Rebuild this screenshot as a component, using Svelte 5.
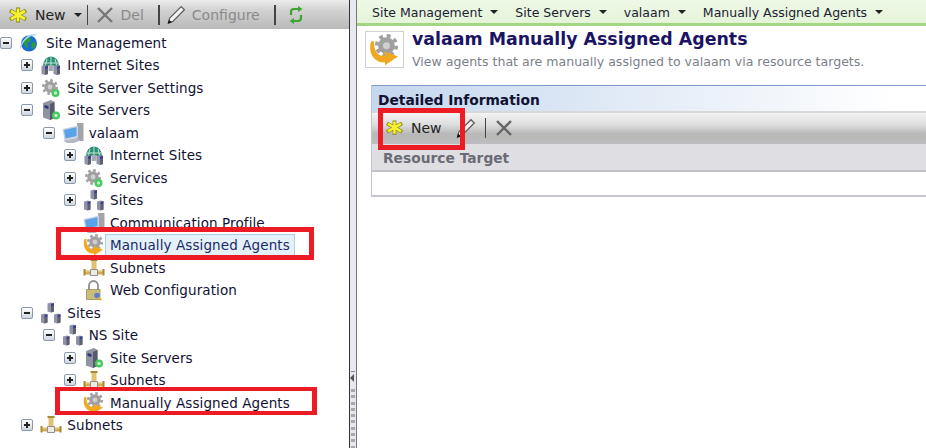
<script>
  const tree = [
    { level: 0, toggle: 'minus', icon: 'globe', label: 'Site Management' },
    { level: 1, toggle: 'plus', icon: 'internet', label: 'Internet Sites' },
    { level: 1, toggle: 'plus', icon: 'gear', label: 'Site Server Settings' },
    { level: 1, toggle: 'minus', icon: 'server', label: 'Site Servers' },
    { level: 2, toggle: 'minus', icon: 'monitor', label: 'valaam' },
    { level: 3, toggle: 'plus', icon: 'internet', label: 'Internet Sites' },
    { level: 3, toggle: 'plus', icon: 'gear', label: 'Services' },
    { level: 3, toggle: 'plus', icon: 'sites', label: 'Sites' },
    { level: 3, toggle: null, icon: 'monitor', label: 'Communication Profile' },
    { level: 3, toggle: null, icon: 'agent', label: 'Manually Assigned Agents', selected: true },
    { level: 3, toggle: null, icon: 'subnet', label: 'Subnets' },
    { level: 3, toggle: null, icon: 'lock', label: 'Web Configuration' },
    { level: 1, toggle: 'minus', icon: 'sites', label: 'Sites' },
    { level: 2, toggle: 'minus', icon: 'sites', label: 'NS Site' },
    { level: 3, toggle: 'plus', icon: 'server', label: 'Site Servers' },
    { level: 3, toggle: 'plus', icon: 'subnet', label: 'Subnets' },
    { level: 3, toggle: null, icon: 'agent', label: 'Manually Assigned Agents' },
    { level: 1, toggle: 'plus', icon: 'subnet', label: 'Subnets' }
  ];

  const crumbs = ['Site Management', 'Site Servers', 'valaam', 'Manually Assigned Agents'];
</script>

{#snippet gearShape(cx, cy, r, fill)}
  <circle {cx} {cy} r={r * 0.72} {fill} />
  <circle {cx} {cy} r={r * 0.84} fill="none" stroke={fill} stroke-width={r * 0.32} stroke-dasharray={(2 * Math.PI * r * 0.84) / 16} />
  <circle {cx} {cy} r={r * 0.3} fill="#cfcfcf" />
{/snippet}

{#snippet miniServer(x, y)}
  <path d="M{x} {y + 1}l4-1 2.500 1v8l-3 1-3.500-1z" fill="#8f93a6" />
  <path d="M{x + 3.500} {y + 1.500}l3-1v3l-3 1z" fill="#3d3f88" />
  <path d="M{x + 3.500} {y + 4.500}l3-1v5.500l-3 1z" fill="#5e6070" />
{/snippet}

{#snippet agentShape()}
  {@render gearShape(12, 8, 8, '#a0a0a0')}
  <path d="M1.500 5C-1 12 3 20 11 19.500l0 2 9-6-9-3.500 0 3C6 15.500 3 11 3.500 5z" fill="#efa81f" />
{/snippet}

{#snippet icon(name)}
  <svg class="ico" viewBox="0 0 22 22" width="22" height="22" aria-hidden="true">
    {#if name === 'globe'}
      <circle cx="10" cy="11.500" r="8" fill="#1a6fc9" />
      <path d="M5 7l4-2 3 2-1 3-3 1 1 3-2 2-2-4zM13 11l4-1-1 5-3 2-1-4z" fill="#2f9a3c" />
      <path d="M1.500 17C4 8 11 3 18 3c-1-1-2-1-3-1C8 2 1 10 1 17z" fill="#a9d8f7" />
    {:else if name === 'internet'}
      <path d="M3 12a8 9.500 0 0 1 16 0z" fill="#2a8f72" />
      <path d="M11 3v8M7 5l-1.500 6M15 5l1.500 6M4 9h14" stroke="#c5e4d8" stroke-width="1" fill="none" />
      {@render miniServer(1.500, 11)}
      {@render miniServer(13.500, 11)}
      <path d="M8.500 11h5v6h-5z" fill="#a6a9b8" />
    {:else if name === 'gear'}
      {@render gearShape(10, 10, 8, '#a0a0a0')}
      <circle cx="15.500" cy="16" r="4" fill="#47c75c" />
      <circle cx="15.500" cy="16" r="1.700" fill="#c4f0cc" />
    {:else if name === 'server'}
      <path d="M3 4l8-3 3.500 2v16l-4.500 2-7-2.500z" fill="#9094a0" />
      <path d="M10 5l4.500-2v16L10 21z" fill="#565a6c" />
      <path d="M4.500 6l4 1v3l-4-1z" fill="#33357a" />
      <circle cx="16" cy="16.500" r="4" fill="#47c75c" />
      <circle cx="16" cy="16.500" r="1.700" fill="#c4f0cc" />
    {:else if name === 'monitor'}
      <path d="M15 1h6.500v18H15z" fill="#a4a4a8" />
      <path d="M0.500 7L16 3.500v12L2.500 18.500z" fill="#c9d2e2" />
      <path d="M2 8l12.500-2.700v8.700L3.500 16.500z" fill="#5aa2ea" />
      <path d="M1.500 18.500L15 16l3.500 2.500L12 21H5z" fill="#b4b8c4" />
    {:else if name === 'sites'}
      {@render miniServer(7.500, 0.500)}
      {@render miniServer(1, 11.500)}
      {@render miniServer(14, 11.500)}
    {:else if name === 'agent'}
      {@render agentShape()}
    {:else if name === 'subnet'}
      <path d="M1 13h20v4.500H1z" fill="#d2ae55" />
      <path d="M1 13h20v1.500H1z" fill="#f0dca0" />
      <path d="M8.500 3h5v11h-5z" fill="#e0c272" />
      <path d="M7.500 2h7v2h-7zM0.500 12h2v6.500h-2zM19.500 12h2v6.500h-2z" fill="#a98a34" />
      <path d="M7.500 12.500h7v6h-7z" fill="#ebebeb" stroke="#7d7d7d" stroke-width="0.800" />
    {:else if name === 'lock'}
      <path d="M6 11V6.500a4.500 4.500 0 0 1 9 0V11" fill="none" stroke="#8f8f8f" stroke-width="1.800" />
      <path d="M3.500 10.500h13.500v10H3.500z" fill="#cbbd78" stroke="#8e8450" stroke-width="0.700" />
      <circle cx="14" cy="16.500" r="2.800" fill="#5b7fc9" />
      <path d="M15 18.500l3.500 2.500" stroke="#e0b030" stroke-width="1.800" />
    {/if}
  </svg>
{/snippet}

{#snippet star(size)}
  <svg viewBox="0 0 18 16" width={size} height={size * 16 / 18} aria-hidden="true">
    <path d="M9 0.500v15M1 3.500l16 9M17 3.500l-16 9" stroke="#8c8a10" stroke-width="4" />
    <path d="M9 1.500v13M2 4l14 8M16 4L2 12" stroke="#f6f230" stroke-width="2.600" />
  </svg>
{/snippet}

{#snippet cross(size, color)}
  <svg viewBox="0 0 18 18" width={size} height={size} aria-hidden="true">
    <path d="M2 2l14 14M16 2L2 16" stroke={color} stroke-width="2.400" />
  </svg>
{/snippet}

{#snippet pencil(size)}
  <svg viewBox="0 0 20 20" width={size} height={size} aria-hidden="true">
    <path d="M3.500 13.500L14.500 2.500l3 3-11 11-4 1z" fill="#f4f4f4" stroke="#5e5e5e" stroke-width="1.200" />
    <path d="M1.500 19l1.300-4 2.700 2.700z" fill="#111" />
  </svg>
{/snippet}

<div class="page">
  <aside class="left">
    <div class="toolbar">
      <span class="tool new">{@render star(18)} New <i class="caret"></i></span>
      <i class="sep thin"></i>
      <span class="tool off">{@render cross(18, '#777')} Del</span>
      <i class="sep"></i>
      <span class="tool off cfg">{@render pencil(21)} Configure</span>
      <i class="sep"></i>
      <svg class="refresh" viewBox="0 0 16 20" width="16" height="20" aria-hidden="true">
        <path d="M3 10V7c0-2 1-3 3-3h5M13 10v3c0 2-1 3-3 3H5" fill="none" stroke="#3ba52f" stroke-width="2.200" />
        <path d="M10 1l4.500 3L10 7zM6 13l-4.500 3L6 19z" fill="#3ba52f" />
      </svg>
    </div>
    <ul class="tree">
      {#each tree as row}
        <li class="row" style="padding-left: {row.level * 21.33}px">
          <span class="toggle">
            {#if row.toggle}
              <span class="box">
                <i class="h"></i>
                {#if row.toggle === 'plus'}<i class="v"></i>{/if}
              </span>
            {/if}
          </span>
          {@render icon(row.icon)}
          <span class="label" class:selected={row.selected}>{row.label}</span>
        </li>
      {/each}
    </ul>
  </aside>

  <div class="splitter">
    <i class="notch"></i>
    <i class="arrow"></i>
    <i class="dots"></i>
  </div>

  <main class="right">
    <nav class="crumbs">
      {#each crumbs as crumb}
        <span class="crumb">{crumb}<i class="caret"></i></span>
      {/each}
    </nav>
    <header class="head">
      <div class="head-icon">
        <svg viewBox="0 0 22 22" width="32" height="32" aria-hidden="true">
          {@render agentShape()}
        </svg>
      </div>
      <div>
        <h1>valaam Manually Assigned Agents</h1>
        <p>View agents that are manually assigned to valaam via resource targets.</p>
      </div>
    </header>
    <section class="panel">
      <div class="panel-title">Detailed Information</div>
      <div class="panel-bar">
        <span class="tool new">{@render star(17)} New</span>
        <span class="bar-pencil">{@render pencil(22)}</span>
        <i class="sep thin short"></i>
        {@render cross(18, '#666')}
      </div>
      <div class="col-head">Resource Target</div>
      <div class="empty"></div>
    </section>
  </main>

  <i class="mark m1"></i>
  <i class="mark m2"></i>
  <i class="mark m3"></i>
</div>

<style>
  :global(body) {
    margin: 0;
    background: #fff;
  }
  .page {
    position: relative;
    display: flex;
    width: 926px;
    height: 448px;
    overflow: hidden;
    font-family: "DejaVu Sans", Verdana, sans-serif;
    font-size: 13.500px;
    color: #111133;
  }
  .left {
    width: 349px;
    flex: none;
  }
  .toolbar {
    display: flex;
    align-items: center;
    height: 29px;
    padding-left: 9px;
    background: linear-gradient(#ececec, #d2d2d2 35%, #b9b9b9);
  }
  .tool {
    display: inline-flex;
    align-items: center;
    gap: 8px;
    font-size: 14px;
  }
  .tool.off {
    color: #8a8a8a;
    gap: 7px;
  }
  .tool.off.cfg {
    gap: 5px;
  }
  .tool.new {
    color: #222;
  }
  .sep {
    width: 2px;
    height: 20px;
    margin: 0 6px 0 14px;
    background: #444;
  }
  .sep.thin {
    width: 1px;
    margin: 0 8px 0 5px;
  }
  .sep.short {
    margin: 0 9px 0 8px;
  }
  .caret {
    display: inline-block;
    width: 0;
    height: 0;
    border: 4px solid transparent;
    border-top-color: #222;
    border-bottom-width: 0;
  }
  .refresh {
    margin-left: 6px;
  }
  .tree {
    list-style: none;
    margin: 2.600px 0 0;
    padding: 0;
  }
  .row {
    display: flex;
    align-items: center;
    height: 22.500px;
  }
  .toggle {
    width: 20px;
    flex: none;
    box-sizing: border-box;
  }
  .box {
    position: relative;
    display: block;
    width: 10px;
    height: 10px;
    border: 1px solid #8a9aaa;
    border-radius: 2px;
    background: linear-gradient(#fff, #cfd6de);
  }
  .box .h {
    position: absolute;
    left: 2px;
    top: 4px;
    width: 6px;
    height: 2px;
    background: #222;
    display: block;
  }
  .box .v {
    position: absolute;
    left: 4px;
    top: 2px;
    width: 2px;
    height: 6px;
    background: #222;
    display: block;
  }
  .ico {
    flex: none;
    margin: 0 -1px 0 -1px;
  }
  .label {
    margin-left: 1px;
    padding: 2px 4px;
    border: 1px solid transparent;
    letter-spacing: 0.1px;
    white-space: nowrap;
  }
  .label.selected {
    background: #e4f1f9;
    border-color: #a9d3ea;
    color: #1c2a66;
  }
  .splitter {
    position: relative;
    width: 8px;
    flex: none;
    margin-right: -1px;
    background: #e8e8f0;
    border-left: 1px solid #333;
    border-right: 1px solid #777;
    box-sizing: border-box;
  }
  .notch {
    position: absolute;
    top: 371px;
    left: 1px;
    width: 4px;
    height: 1px;
    background: #888;
  }
  .arrow {
    position: absolute;
    top: 374px;
    left: 0;
    width: 0;
    height: 0;
    border: 4px solid transparent;
    border-right: 4px solid #555;
    border-left-width: 0;
  }
  .dots {
    position: absolute;
    top: 389px;
    bottom: 0;
    left: 1px;
    width: 4px;
    background: repeating-linear-gradient(#a8a8a8 0 3px, transparent 3px 6.300px);
  }
  .right {
    flex: 1;
    min-width: 0;
  }
  .crumbs {
    display: flex;
    gap: 17px;
    height: 22px;
    padding: 1px 0 0 16px;
    align-items: center;
    background: linear-gradient(#eef8e7, #e4f4d9);
    border-bottom: 3px solid #a3d582;
    font-size: 12.500px;
    color: #1c2233;
  }
  .crumb {
    display: inline-flex;
    align-items: center;
    gap: 8px;
    white-space: nowrap;
  }
  .head {
    display: flex;
    gap: 8px;
    padding: 5px 0 0 9px;
  }
  .head-icon {
    width: 37px;
    height: 35px;
    border: 1px solid #d0d0d0;
    display: flex;
    align-items: center;
    justify-content: center;
    flex: none;
  }
  h1 {
    margin: -2px 0 0;
    font-size: 17.400px;
    line-height: 21px;
    color: #1b1464;
    font-weight: bold;
    white-space: nowrap;
  }
  p {
    margin: 4px 0 0;
    font-size: 12.550px;
    line-height: 16px;
    color: #7b7f8a;
    white-space: nowrap;
  }
  .panel {
    margin: 15px 0 0 15px;
    border-left: 1px solid #c4c4cc;
    border-bottom: 2px solid #c6c6cc;
  }
  .panel-title {
    height: 26px;
    line-height: 29px;
    padding-left: 6px;
    box-sizing: border-box;
    border-top: 1px solid #7d9cc9;
    background: linear-gradient(90deg, #c5d7ee, #ffffff 94%);
    font-weight: bold;
    font-size: 13.800px;
    color: #111133;
  }
  .panel-bar {
    display: flex;
    align-items: center;
    height: 32px;
    padding-left: 14px;
    box-sizing: border-box;
    background: linear-gradient(#f4f4f4, #dcdcdc 40%, #b8b8b8 70%, #bdbdbd);
    border-top: 2px solid #d8d8d8;
  }
  .bar-pencil {
    display: inline-flex;
    margin-left: 13px;
  }
  .col-head {
    height: 29px;
    line-height: 28px;
    padding-left: 11px;
    box-sizing: border-box;
    background: #dedee3;
    border-top: 1px solid #bcbcc4;
    border-bottom: 2px solid #c2c2c6;
    font-weight: bold;
    font-size: 13.800px;
    color: #6b6b75;
  }
  .empty {
    height: 23px;
    background: #fff;
  }
  .mark {
    position: absolute;
    display: block;
    box-sizing: border-box;
    border: 5px solid #ed1c24;
  }
  .m1 {
    left: 56px;
    top: 227px;
    width: 258px;
    height: 33px;
  }
  .m2 {
    left: 55px;
    top: 387px;
    width: 262px;
    height: 28px;
    border-width: 4px 5px;
  }
  .m3 {
    left: 378px;
    top: 108px;
    width: 87px;
    height: 42px;
  }
</style>
